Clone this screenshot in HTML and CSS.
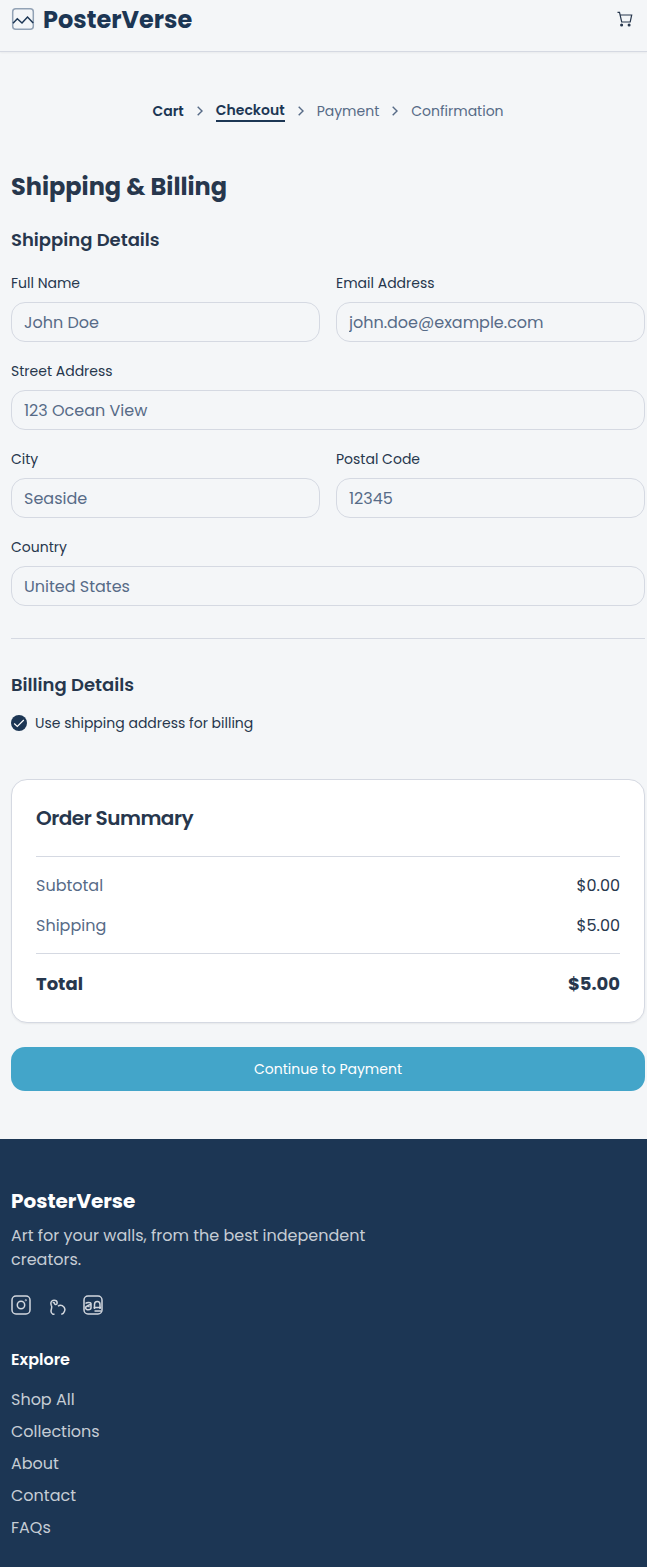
FILE: index.html
```html
<!DOCTYPE html>
<html lang="en">
<head>
<meta charset="utf-8">
<title>PosterVerse - Checkout</title>
<link rel="stylesheet" href="styles.css">
</head>
<body>
<header class="header">
  <a class="logo">
    <svg width="24" height="24" viewBox="0 0 24 24" fill="none">
      <rect x="1.7" y="1.7" width="20.6" height="20.6" rx="3" stroke="#92a2b5" stroke-width="1.5"/>
      <path d="M2 16.3 6.3 11.8 11 16l5.5-6 5.7 6" stroke="#1c3654" stroke-width="1.5"/>
    </svg>
    <span class="logo-text">PosterVerse</span>
  </a>
  <svg class="cart-icon" width="16" height="16" viewBox="0 0 16 16" fill="none" stroke="#27374d" stroke-width="1.2">
    <path d="M.5 1.300h2l2.200 9.700h8.500l1.500-7H3.200"/>
    <circle cx="4.600" cy="14" r=".9" fill="#27374d"/>
    <circle cx="12.100" cy="14" r=".9" fill="#27374d"/>
  </svg>
</header>

<main class="container">
  <nav class="steps">
    <span class="step done">Cart</span>
    <svg width="16" height="16" viewBox="0 0 16 16"><path d="M5.700 3.700 10 8 5.700 12.300"/></svg>
    <span class="step active">Checkout</span>
    <svg width="16" height="16" viewBox="0 0 16 16"><path d="M5.700 3.700 10 8 5.700 12.300"/></svg>
    <span class="step">Payment</span>
    <svg width="16" height="16" viewBox="0 0 16 16"><path d="M5.700 3.700 10 8 5.700 12.300"/></svg>
    <span class="step">Confirmation</span>
  </nav>

  <h1>Shipping &amp; Billing</h1>
  <h2 class="shipping-title">Shipping Details</h2>
  <form class="form-grid">
    <div class="form-group">
      <label for="name">Full Name</label>
      <input type="text" id="name" placeholder="John Doe">
    </div>
    <div class="form-group">
      <label for="email">Email Address</label>
      <input type="text" id="email" placeholder="john.doe@example.com">
    </div>
    <div class="form-group full">
      <label for="street">Street Address</label>
      <input type="text" id="street" placeholder="123 Ocean View">
    </div>
    <div class="form-group">
      <label for="city">City</label>
      <input type="text" id="city" placeholder="Seaside">
    </div>
    <div class="form-group">
      <label for="postal">Postal Code</label>
      <input type="text" id="postal" placeholder="12345">
    </div>
    <div class="form-group full">
      <label for="country">Country</label>
      <input type="text" id="country" placeholder="United States">
    </div>
  </form>

  <hr class="divider">

  <h2 class="billing-title">Billing Details</h2>
  <div class="check-row">
    <svg width="16" height="16" viewBox="0 0 16 16" fill="none">
      <circle cx="8" cy="8" r="8" fill="#1c3654"/>
      <path d="M3.2 8.5 6.3 11.4 12.8 5" stroke="#fff" stroke-width="1.2"/>
    </svg>
    <span>Use shipping address for billing</span>
  </div>

  <section class="summary">
    <h3>Order Summary</h3>
    <div class="summary-rows">
      <div class="row"><span class="name">Subtotal</span><span class="price">$0.00</span></div>
      <div class="row"><span class="name">Shipping</span><span class="price">$5.00</span></div>
    </div>
    <div class="row total"><span>Total</span><span class="price">$5.00</span></div>
  </section>

  <button class="btn">Continue to Payment</button>
</main>

<footer class="footer">
  <h3 class="brand">PosterVerse</h3>
  <p class="tagline">Art for your walls, from the best independent creators.</p>
  <div class="social">
    <svg width="20" height="20" viewBox="0 0 20 20">
      <rect x="1" y="1" width="18" height="18" rx="4"/>
      <circle cx="10" cy="10" r="3.7"/>
      <circle cx="14.8" cy="5.2" r=".3"/>
    </svg>
    <svg width="20" height="20" viewBox="0 0 20 20">
      <path d="M7.500 19.300H6C4 18.300 3.700 16.500 4.300 14.500 4.900 12.500 5 11.500 4.300 10.300 3.200 7.500 4.500 5.300 7 5.300c2 0 3.200 1.200 3.200 2.700 0 1.800-2.500 2-2.700.5-.1-.7-.8-1.200-1.700-.7M11 11.300c1.200-1.200 3-1.300 4.300-.6 2.300 1.300 3 3.600 2.200 5.600-.5 1.600-1.500 2.700-3.200 3"/>
    </svg>
    <svg width="20" height="20" viewBox="0 0 20 20">
      <rect x="1" y="1" width="18" height="18" rx="4"/>
      <path d="M2.500 8.500C4 7 8 7 8 8.700 8 10.500 4 9.500 3.500 12M8 8.500v4.300c0 2.600-5.400 2.600-5.400 0 0-2.400 3.500-2.300 3.500-.6M11.500 14V9.500c0-4 5.500-4 5.500 0V14M10.500 12.500H18M11.500 16H18"/>
    </svg>
  </div>
  <h4>Explore</h4>
  <ul class="links">
    <li>Shop All</li>
    <li>Collections</li>
    <li>About</li>
    <li>Contact</li>
    <li>FAQs</li>
  </ul>
</footer>
</body>
</html>
```
FILE: styles.css
```css
* {
  box-sizing: border-box;
}

body {
  margin: 0;
  background-color: #f4f6f8;
  color: #27374d;
  font-family: Poppins, Inter, sans-serif;
  font-size: 16px;
  line-height: 24px;
}

h1, h2, h3, h4, p, ul {
  margin: 0;
  padding: 0;
}

.header {
  display: flex;
  align-items: center;
  justify-content: space-between;
  height: 52px;
  padding: 0 14px 13px 11px;
  border-bottom: 1px solid #d5d9e2;
  box-shadow: 0 1px 2px rgba(0, 0, 0, 0.05);
}

.logo {
  display: flex;
  align-items: center;
  gap: 8px;
}

.logo-text {
  padding-top: 2px;
  font-size: 24px;
  font-weight: 700;
  line-height: 32px;
  color: #1c3654;
}

.container {
  padding: 48px 2px 48px 11px;
}

.steps {
  display: flex;
  justify-content: center;
  align-items: center;
  gap: 8px;
  height: 22px;
  font-size: 14px;
  line-height: 20px;
  color: #576b87;
}

.steps svg {
  fill: none;
  stroke: #576b87;
  stroke-width: 1.4;
}

.step.done,
.step.active {
  font-weight: 600;
  color: #1c3654;
}

.step.active {
  border-bottom: 2px solid #1c3654;
}

h1 {
  margin-top: 49px;
  font-size: 24px;
  font-weight: 700;
  line-height: 32px;
}

h2 {
  font-size: 18px;
  font-weight: 600;
  line-height: 28px;
}

.shipping-title {
  margin-top: 23px;
}

.form-grid {
  display: grid;
  grid-template-columns: 1fr 1fr;
  gap: 16px;
  margin-top: 16px;
}

.form-group.full {
  grid-column: span 2;
}

label {
  display: block;
  margin-bottom: 7px;
  padding-top: 1px;
  font-size: 14px;
  line-height: 24px;
}

input {
  display: block;
  width: 100%;
  height: 40px;
  padding: 0 12px;
  border: 1px solid #d5d9e2;
  border-radius: 14px;
  background: transparent;
  font-family: inherit;
  font-size: 16px;
}

input::placeholder {
  color: #576b87;
}

.divider {
  height: 1px;
  margin: 32px 0 0;
  border: none;
  background-color: #d5d9e2;
}

.billing-title {
  margin-top: 32px;
}

.check-row {
  display: flex;
  align-items: center;
  gap: 8px;
  height: 16px;
  margin-top: 16px;
  font-size: 14px;
}

.summary {
  height: 244px;
  margin-top: 48px;
  padding: 24px;
  border: 1px solid #d5d9e2;
  border-radius: 16px;
  background-color: #fff;
  box-shadow: 0 1px 2px rgba(0, 0, 0, 0.06);
}

.summary h3 {
  font-size: 20px;
  font-weight: 600;
  line-height: 28px;
  letter-spacing: -0.025em;
}

.row {
  display: flex;
  justify-content: space-between;
}

.name {
  color: #576b87;
}

.summary-rows {
  display: grid;
  gap: 16px;
  margin-top: 24px;
  padding: 17px 0 15px;
  border-top: 1px solid #d5d9e2;
  border-bottom: 1px solid #d5d9e2;
}

.total {
  padding-top: 16px;
  font-size: 18px;
  font-weight: 700;
  line-height: 28px;
}

.btn {
  display: block;
  width: 100%;
  height: 44px;
  margin-top: 24px;
  border: none;
  border-radius: 14px;
  background-color: #43a5c9;
  color: #fff;
  font-family: inherit;
  font-size: 14px;
}

.footer {
  height: 428px;
  padding: 48px 11px 0;
  background-color: #1c3654;
  color: #c6cdd5;
}

.brand {
  font-size: 20px;
  font-weight: 700;
  line-height: 28px;
  color: #fff;
}

.tagline {
  width: 370px;
  margin-top: 9px;
}

.social {
  display: flex;
  gap: 16px;
  margin-top: 23px;
}

.social svg {
  fill: none;
  stroke: #d2d7de;
  stroke-width: 1.5;
}

h4 {
  margin-top: 33px;
  font-weight: 600;
  color: #fff;
}

.links {
  display: grid;
  gap: 8px;
  margin-top: 16px;
  list-style: none;
}
```
